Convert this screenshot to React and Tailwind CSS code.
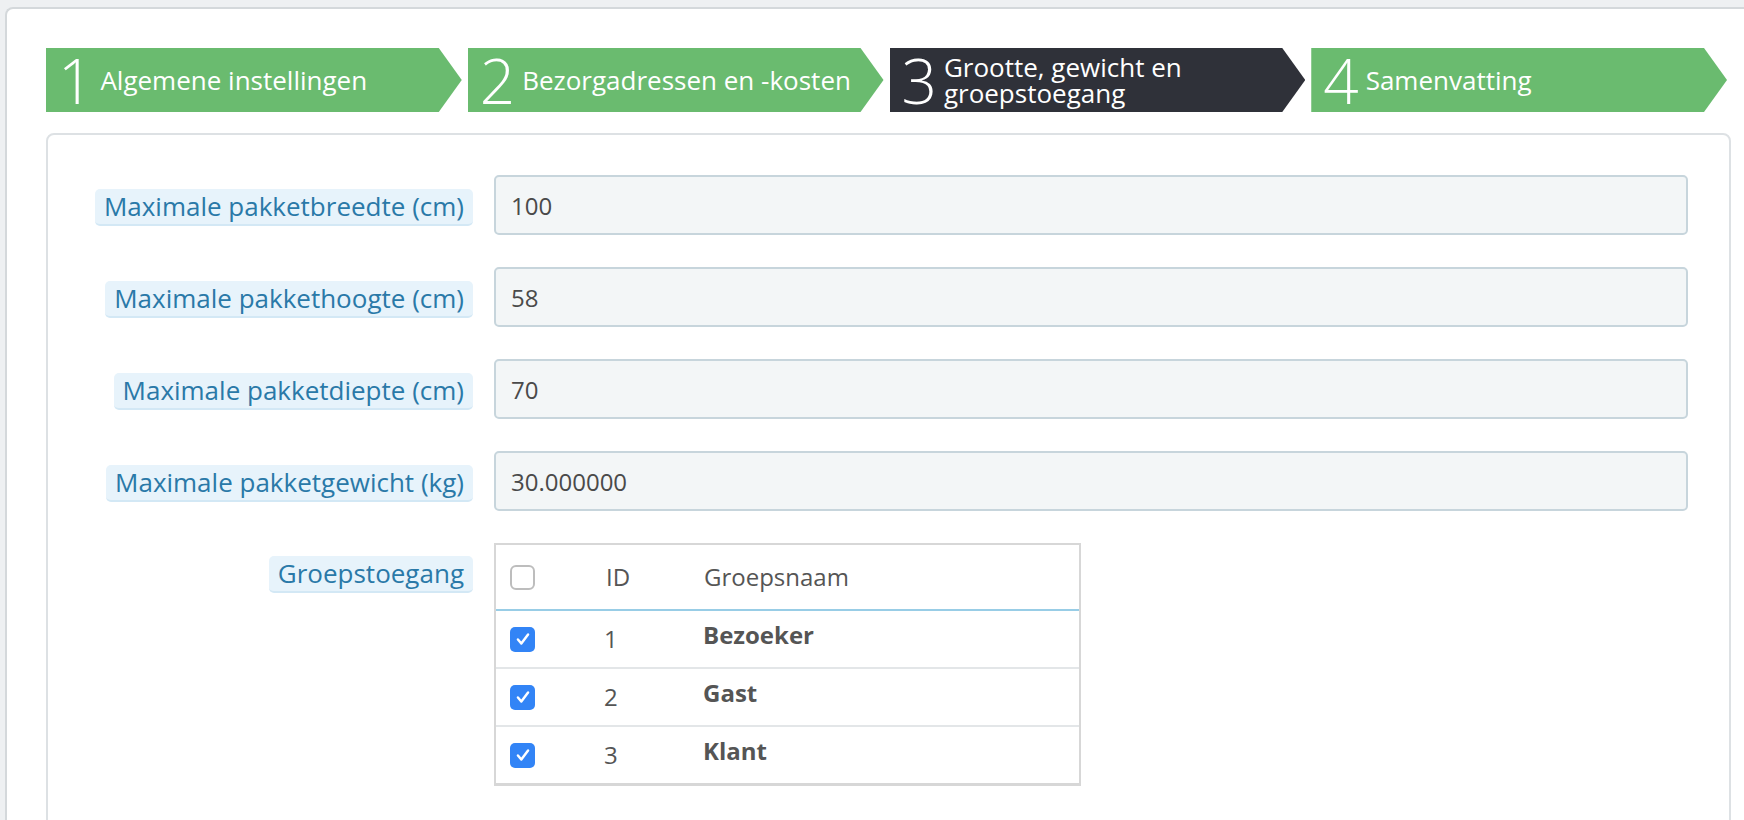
import React from 'react';

const font = { fontFamily: '"Open Sans", "Liberation Sans", sans-serif' };

const steps = [
  { n: '1', label: 'Algemene instellingen', active: false },
  { n: '2', label: 'Bezorgadressen en -kosten', active: false },
  { n: '3', label: ['Grootte, gewicht en', 'groepstoegang'], active: true },
  { n: '4', label: 'Samenvatting', active: false },
];

const fields = [
  { label: 'Maximale pakketbreedte (cm)', value: '100' },
  { label: 'Maximale pakkethoogte (cm)', value: '58' },
  { label: 'Maximale pakketdiepte (cm)', value: '70' },
  { label: 'Maximale pakketgewicht (kg)', value: '30.000000' },
];

const groups = [
  { id: 1, name: 'Bezoeker' },
  { id: 2, name: 'Gast' },
  { id: 3, name: 'Klant' },
];

const Step = ({ step }) => (
  <div
    className={`h-16 flex items-center pl-[12px] gap-[7px] text-white [clip-path:polygon(0_0,calc(100%_-_23px)_0,100%_50%,calc(100%_-_23px)_100%,0_100%)] ${
      step.active ? 'bg-[#2f3139]' : 'bg-[#6abb6f]'
    }`}
  >
    <span className="text-[62px] font-[350] leading-none">{step.n}</span>
    {Array.isArray(step.label) ? (
      <div className="flex flex-col text-[26px] leading-[26px] whitespace-nowrap">
        <span>{step.label[0]}</span>
        <span>{step.label[1]}</span>
      </div>
    ) : (
      <span className="text-[26px] leading-none whitespace-nowrap">{step.label}</span>
    )}
  </div>
);

const Label = ({ children }) => (
  <span className="h-[37px] flex items-center px-[9px] rounded-[5px] bg-[#e7f3fb] border-b-2 border-[#d3e8f5] text-[26px] text-[#2a79a8] whitespace-nowrap">
    {children}
  </span>
);

const CheckBox = ({ checked }) =>
  checked ? (
    <div className="w-[25px] h-[25px] rounded-[5px] bg-[#3284f6] flex items-center justify-center">
      <svg viewBox="0 0 16 16" className="w-[18px] h-[18px]" fill="none" stroke="white" strokeWidth="2.2" strokeLinecap="round" strokeLinejoin="round">
        <path d="M3.5 8.5 L6.5 12 L12.5 4" />
      </svg>
    </div>
  ) : (
    <div className="w-[25px] h-[25px] rounded-[6px] bg-white border-2 border-[#bdbdbd]" />
  );

export default function App() {
  return (
    <div className="h-[820px] overflow-hidden bg-[#eef0f2] pt-[7px] pl-[5px]" style={font}>
      <div className="w-[1780px] bg-white border-l-2 border-t-2 border-[#d4d8db] rounded-tl-[8px] pt-[39px] pl-[39px] h-[900px]">
        {/* wizard steps */}
        <div className="w-[1681px] grid grid-cols-4 gap-[6px]">
          {steps.map((s) => (
            <Step key={s.n} step={s} />
          ))}
        </div>

        {/* form panel */}
        <div className="mt-[21px] w-[1685px] border-2 border-[#dde1e4] rounded-[8px] pt-[40px] pb-[80px]">
          <div className="flex flex-col gap-8">
            {fields.map((f) => (
              <div key={f.label} className="flex items-center">
                <div className="w-[425px] flex justify-end mt-[4px]">
                  <Label>{f.label}</Label>
                </div>
                <input
                  readOnly
                  value={f.value}
                  className="ml-[21px] w-[1194px] h-[60px] rounded-[5px] border-2 border-[#c7d5dc] bg-[#f3f6f7] px-[15px] text-[24px] text-[#4a4a4a] outline-none"
                />
              </div>
            ))}

            <div className="flex items-start">
              <div className="w-[425px] flex justify-end mt-[13px]">
                <Label>Groepstoegang</Label>
              </div>
              <div className="ml-[21px] w-[587px] border-2 border-b-[3px] border-[#d7d7d7] text-[24px] text-[#555]">
                <div className="grid grid-cols-[94px_98px_1fr] h-[66px] items-center border-b-2 border-[#98cde6]">
                  <div className="pl-[14px]">
                    <CheckBox checked={false} />
                  </div>
                  <div className="pl-[16px]">ID</div>
                  <div className="pl-[16px]">Groepsnaam</div>
                </div>
                {groups.map((g, i) => (
                  <div
                    key={g.id}
                    className={`grid grid-cols-[94px_98px_1fr] items-center ${
                      i < groups.length - 1 ? 'h-[58px] border-b-2 border-[#e3e6e8]' : 'h-[56px]'
                    }`}
                  >
                    <div className="pl-[14px]">
                      <CheckBox checked />
                    </div>
                    <div className="pl-[14px]">{g.id}</div>
                    <div className="pl-[15px] pb-[8px] font-bold">{g.name}</div>
                  </div>
                ))}
              </div>
            </div>
          </div>
        </div>
      </div>
    </div>
  );
}
